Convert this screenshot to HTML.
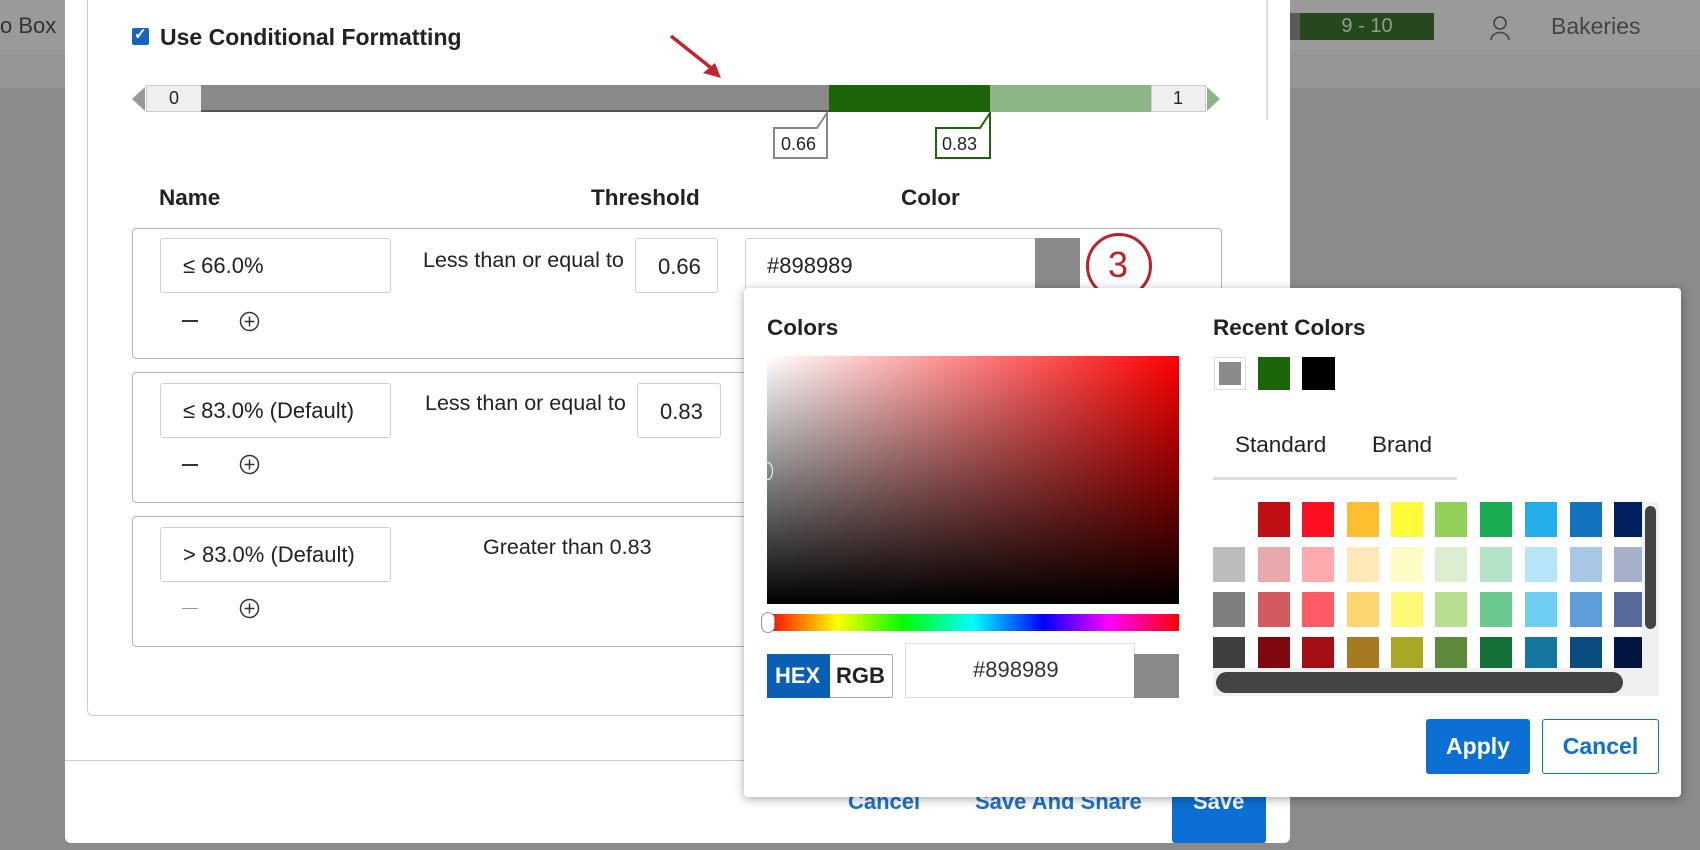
<!DOCTYPE html>
<html><head><meta charset="utf-8"><style>
*{box-sizing:border-box;margin:0;padding:0}
body{width:1700px;height:850px;overflow:hidden;position:relative;background:#8b8b8b;font-family:"Liberation Sans",Arial,sans-serif;color:#222}
.a{position:absolute}
.t{position:absolute;white-space:nowrap}
.inp{position:absolute;background:#fff;border:1px solid #cfcfcf;border-radius:3px}
.row{position:absolute;left:132px;width:1090px;border:1px solid #b5b5b5;border-radius:4px;background:#fff}
.sw{position:absolute;width:32px;height:35px}
</style></head><body>
<div class="a" style="left:0;top:0;width:1700px;height:54px;background:#9a9a9a"></div>
<div class="a" style="left:0;top:54px;width:1700px;height:34px;background:#959595"></div>
<div class="t" style="left:0;top:13px;font-size:22px;color:#333">o Box</div>
<div class="a" style="left:1290px;top:13px;width:144px;height:27px;background:#27481f"></div>
<div class="a" style="left:1290px;top:13px;width:10px;height:27px;background:#5a5a5a"></div>
<div class="t" style="left:1300px;top:15px;width:134px;text-align:center;font-size:20px;color:#8e9e8b">9 - 10</div>
<svg class="a" style="left:1489px;top:15px" width="22" height="26" viewBox="0 0 22 26"><circle cx="11" cy="8" r="6" fill="none" stroke="#444" stroke-width="1.6"/><path d="M2 25 C3 15 19 15 20 25" fill="none" stroke="#444" stroke-width="1.6"/></svg>
<div class="t" style="left:1551px;top:13px;font-size:23px;color:#444">Bakeries</div>

<!-- modal -->
<div class="a" style="left:65px;top:-10px;width:1225px;height:853px;background:#fff;border-radius:6px"></div>
<div class="a" style="left:1266px;top:0;width:2px;height:120px;background:#ddd"></div>
<div class="a" style="left:87px;top:-10px;width:1180px;height:726px;border:1px solid #ccc;border-radius:6px;border-top:none;border-right:none"></div>
<div class="a" style="left:65px;top:760px;width:1225px;height:1px;background:#ccc"></div>
<div class="t" style="left:848px;top:789px;font-size:22px;color:#1b6fd1;font-weight:bold">Cancel</div>
<div class="t" style="left:975px;top:789px;font-size:22px;color:#1b6fd1;font-weight:bold">Save And Share</div>
<div class="a" style="left:1172px;top:783px;width:94px;height:60px;background:#0b6fd4;border-radius:3px"></div>
<div class="t" style="left:1193px;top:789px;font-size:22px;color:#fff;font-weight:bold">Save</div>

<div class="a" style="left:132px;top:28px;width:17px;height:17px;background:#1565c0;border-radius:2px"></div>
<div class="t" style="left:134px;top:25px;font-size:15px;color:#fff;font-weight:bold">✓</div>
<div class="t" style="left:160px;top:24px;font-size:23px;font-weight:bold;color:#222">Use Conditional Formatting</div>
<svg class="a" style="left:665px;top:33px" width="62" height="50"><line x1="6" y1="3" x2="50" y2="38" stroke="#c0272d" stroke-width="3.5"/><path d="M56 45 L38 40 L50 30 Z" fill="#c0272d"/></svg>

<!-- slider -->
<div class="a" style="left:132px;top:87px;width:0;height:0;border-top:12px solid transparent;border-bottom:12px solid transparent;border-right:13px solid #999"></div>
<div class="a" style="left:146px;top:85px;width:56px;height:27px;background:#efefef;border:1px solid #ccc"></div>
<div class="t" style="left:169px;top:88px;font-size:18px">0</div>
<div class="a" style="left:201px;top:85px;width:628px;height:27px;background:#898989;border-bottom:2px solid #555"></div>
<div class="a" style="left:829px;top:85px;width:161px;height:27px;background:#1c6509"></div>
<div class="a" style="left:990px;top:85px;width:161px;height:27px;background:#8cb585"></div>
<div class="a" style="left:1151px;top:85px;width:55px;height:27px;background:#efefef;border:1px solid #ccc"></div>
<div class="t" style="left:1173px;top:88px;font-size:18px">1</div>
<div class="a" style="left:1207px;top:87px;width:0;height:0;border-top:12px solid transparent;border-bottom:12px solid transparent;border-left:13px solid #8cb585"></div>
<svg class="a" style="left:773px;top:112px" width="220" height="50"><path d="M1 16 L44 16 L54 1 L54 46 L1 46Z" fill="#fff" stroke="#888" stroke-width="2"/><path d="M163 16 L207 16 L217 1 L217 46 L163 46Z" fill="#fff" stroke="#1c6509" stroke-width="2"/></svg>
<div class="t" style="left:781px;top:134px;font-size:18px">0.66</div>
<div class="t" style="left:942px;top:134px;font-size:18px">0.83</div>

<div class="t" style="left:159px;top:185px;font-size:22.5px;font-weight:bold">Name</div>
<div class="t" style="left:591px;top:185px;font-size:22.5px;font-weight:bold">Threshold</div>
<div class="t" style="left:901px;top:185px;font-size:22.5px;font-weight:bold">Color</div>

<div class="row" style="top:228px;height:131px"></div>
<div class="row" style="top:372px;height:131px"></div>
<div class="row" style="top:516px;height:131px"></div>

<div class="inp" style="left:160px;top:238px;width:231px;height:55px"></div>
<div class="t" style="left:183px;top:253px;font-size:22px">≤ 66.0%</div>
<div class="inp" style="left:160px;top:383px;width:231px;height:55px"></div>
<div class="t" style="left:183px;top:398px;font-size:22px">≤ 83.0% (Default)</div>
<div class="inp" style="left:160px;top:527px;width:231px;height:55px"></div>
<div class="t" style="left:183px;top:542px;font-size:22px">&gt; 83.0% (Default)</div>

<div class="a" style="left:182px;top:320px;width:16px;height:2px;background:#333"></div>
<div class="a" style="left:182px;top:464px;width:16px;height:2px;background:#333"></div>
<div class="a" style="left:182px;top:608px;width:16px;height:1px;background:#999"></div>
<svg class="a" style="left:239px;top:311px" width="21" height="21"><circle cx="10.5" cy="10.5" r="9" fill="none" stroke="#333" stroke-width="1.5"/><path d="M10.5 5.5v10M5.5 10.5h10" stroke="#333" stroke-width="1.5"/></svg>
<svg class="a" style="left:239px;top:454px" width="21" height="21"><circle cx="10.5" cy="10.5" r="9" fill="none" stroke="#333" stroke-width="1.5"/><path d="M10.5 5.5v10M5.5 10.5h10" stroke="#333" stroke-width="1.5"/></svg>
<svg class="a" style="left:239px;top:598px" width="21" height="21"><circle cx="10.5" cy="10.5" r="9" fill="none" stroke="#333" stroke-width="1.5"/><path d="M10.5 5.5v10M5.5 10.5h10" stroke="#333" stroke-width="1.5"/></svg>

<div class="t" style="left:423px;top:248px;font-size:21.5px">Less than or equal to</div>
<div class="inp" style="left:635px;top:238px;width:83px;height:55px;overflow:hidden"><div class="t" style="left:22px;top:15px;font-size:22px">0.66</div></div>
<div class="t" style="left:425px;top:391px;font-size:21.5px">Less than or equal to</div>
<div class="inp" style="left:637px;top:383px;width:84px;height:55px;overflow:hidden"><div class="t" style="left:22px;top:15px;font-size:22px">0.83</div></div>
<div class="t" style="left:483px;top:535px;font-size:21.5px">Greater than 0.83</div>

<div class="inp" style="left:745px;top:238px;width:291px;height:55px"></div>
<div class="t" style="left:767px;top:253px;font-size:22px">#898989</div>
<div class="a" style="left:1035px;top:238px;width:45px;height:55px;background:#898989"></div>
<div class="a" style="left:1086px;top:233px;width:66px;height:66px;border:3px solid #b8232a;border-radius:50%;background:#fff"></div>
<div class="t" style="left:1108px;top:244px;font-size:36px;color:#b8232a">3</div>

<!-- popup -->
<div class="a" style="left:744px;top:288px;width:937px;height:509px;background:#fff;border-radius:4px;box-shadow:0 2px 10px rgba(0,0,0,.35)"></div>
<div class="t" style="left:767px;top:315px;font-size:22.5px;font-weight:bold">Colors</div>
<div class="a" style="left:767px;top:356px;width:412px;height:248px;background:linear-gradient(to top,#000,rgba(0,0,0,0)),linear-gradient(to right,#fff,#f00)"></div>
<div class="a" style="left:763px;top:462px;width:10px;height:18px;border:1px solid #fff;border-radius:50%"></div>
<div class="a" style="left:767px;top:614px;width:412px;height:17px;background:linear-gradient(to right,#f00,#ff0 17%,#0f0 33%,#0ff 50%,#00f 67%,#f0f 83%,#f00)"></div>
<div class="a" style="left:761px;top:612px;width:14px;height:21px;background:#fff;border:1px solid #999;border-radius:7px"></div>
<div class="a" style="left:767px;top:654px;width:126px;height:44px;border:1px solid #aaa;border-radius:2px;background:#fff"></div>
<div class="a" style="left:767px;top:654px;width:63px;height:44px;background:#0a5eb3"></div>
<div class="t" style="left:775px;top:663px;font-size:22px;color:#fff;font-weight:bold">HEX</div>
<div class="t" style="left:836px;top:663px;font-size:22px;font-weight:bold;color:#222">RGB</div>
<div class="a" style="left:905px;top:643px;width:230px;height:55px;border:1px solid #ddd;background:#fff"></div>
<div class="t" style="left:973px;top:657px;font-size:22px;color:#333">#898989</div>
<div class="a" style="left:1134px;top:654px;width:45px;height:44px;background:#898989"></div>

<div class="t" style="left:1213px;top:315px;font-size:22.5px;font-weight:bold">Recent Colors</div>
<div class="a" style="left:1214px;top:357px;width:32px;height:33px;border:1px solid #ddd;background:#fff"><div style="margin:4px;width:22px;height:23px;background:#898989"></div></div>
<div class="a" style="left:1258px;top:357px;width:32px;height:33px;background:#1c6509"></div>
<div class="a" style="left:1302px;top:357px;width:33px;height:33px;background:#000"></div>
<div class="t" style="left:1235px;top:432px;font-size:22.5px;color:#222">Standard</div>
<div class="t" style="left:1372px;top:432px;font-size:22.5px;color:#222">Brand</div>
<div class="a" style="left:1213px;top:477px;width:244px;height:3px;background:#ddd"></div>

<div class="a" style="left:1213px;top:502px;width:446px;height:194px;background:#fff"></div>
<div class="a" style="left:1213px;top:502px;width:429px;height:166px;overflow:hidden">
<div class="sw" style="left:45px;top:0;background:#c00f14"></div><div class="sw" style="left:89px;top:0;background:#ff0f1f"></div><div class="sw" style="left:134px;top:0;background:#fdbf2f"></div><div class="sw" style="left:178px;top:0;background:#fffb37"></div><div class="sw" style="left:222px;top:0;background:#93d05a"></div><div class="sw" style="left:267px;top:0;background:#18ad51"></div><div class="sw" style="left:312px;top:0;background:#23aeea"></div><div class="sw" style="left:357px;top:0;background:#1273c0"></div><div class="sw" style="left:401px;top:0;background:#02205f"></div>
<div class="sw" style="left:0;top:45px;background:#bcbcbc"></div><div class="sw" style="left:45px;top:45px;background:#e8a9ac"></div><div class="sw" style="left:89px;top:45px;background:#feabaf"></div><div class="sw" style="left:134px;top:45px;background:#fde9b8"></div><div class="sw" style="left:178px;top:45px;background:#fefcc5"></div><div class="sw" style="left:222px;top:45px;background:#ddeed0"></div><div class="sw" style="left:267px;top:45px;background:#b4e4c8"></div><div class="sw" style="left:312px;top:45px;background:#b7e5f8"></div><div class="sw" style="left:357px;top:45px;background:#a9c8e6"></div><div class="sw" style="left:401px;top:45px;background:#a6b0c8"></div>
<div class="sw" style="left:0;top:90px;background:#7f7f7f"></div><div class="sw" style="left:45px;top:90px;background:#d35b60"></div><div class="sw" style="left:89px;top:90px;background:#ff5b64"></div><div class="sw" style="left:134px;top:90px;background:#fdd570"></div><div class="sw" style="left:178px;top:90px;background:#fdfa77"></div><div class="sw" style="left:222px;top:90px;background:#b9dd8f"></div><div class="sw" style="left:267px;top:90px;background:#69c98f"></div><div class="sw" style="left:312px;top:90px;background:#6fcff2"></div><div class="sw" style="left:357px;top:90px;background:#5e9ed8"></div><div class="sw" style="left:401px;top:90px;background:#566b99"></div>
<div class="sw" style="left:0;top:135px;background:#3f3f3f"></div><div class="sw" style="left:45px;top:135px;background:#7e0a0f"></div><div class="sw" style="left:89px;top:135px;background:#a50e12"></div><div class="sw" style="left:134px;top:135px;background:#a57a21"></div><div class="sw" style="left:178px;top:135px;background:#a8a825"></div><div class="sw" style="left:222px;top:135px;background:#5f8a3c"></div><div class="sw" style="left:267px;top:135px;background:#137038"></div><div class="sw" style="left:312px;top:135px;background:#15779f"></div><div class="sw" style="left:357px;top:135px;background:#0b4b80"></div><div class="sw" style="left:401px;top:135px;background:#011540"></div>
</div>
<div class="a" style="left:1642px;top:502px;width:17px;height:194px;background:#f0f0f0"></div>
<div class="a" style="left:1645px;top:506px;width:11px;height:123px;background:#444;border-radius:6px"></div>
<div class="a" style="left:1213px;top:668px;width:429px;height:28px;background:#f0f0f0"></div>
<div class="a" style="left:1216px;top:672px;width:407px;height:21px;background:#444;border-radius:11px"></div>

<div class="a" style="left:1426px;top:719px;width:104px;height:55px;background:#0b6fd4;border-radius:3px"></div>
<div class="t" style="left:1426px;top:733px;width:104px;text-align:center;font-size:23px;font-weight:bold;color:#fff">Apply</div>
<div class="a" style="left:1542px;top:719px;width:117px;height:55px;border:1px solid #0b6fd4;border-radius:3px;background:#fff"></div>
<div class="t" style="left:1542px;top:733px;width:117px;text-align:center;font-size:23px;font-weight:bold;color:#0b6fd4">Cancel</div>
</body></html>
